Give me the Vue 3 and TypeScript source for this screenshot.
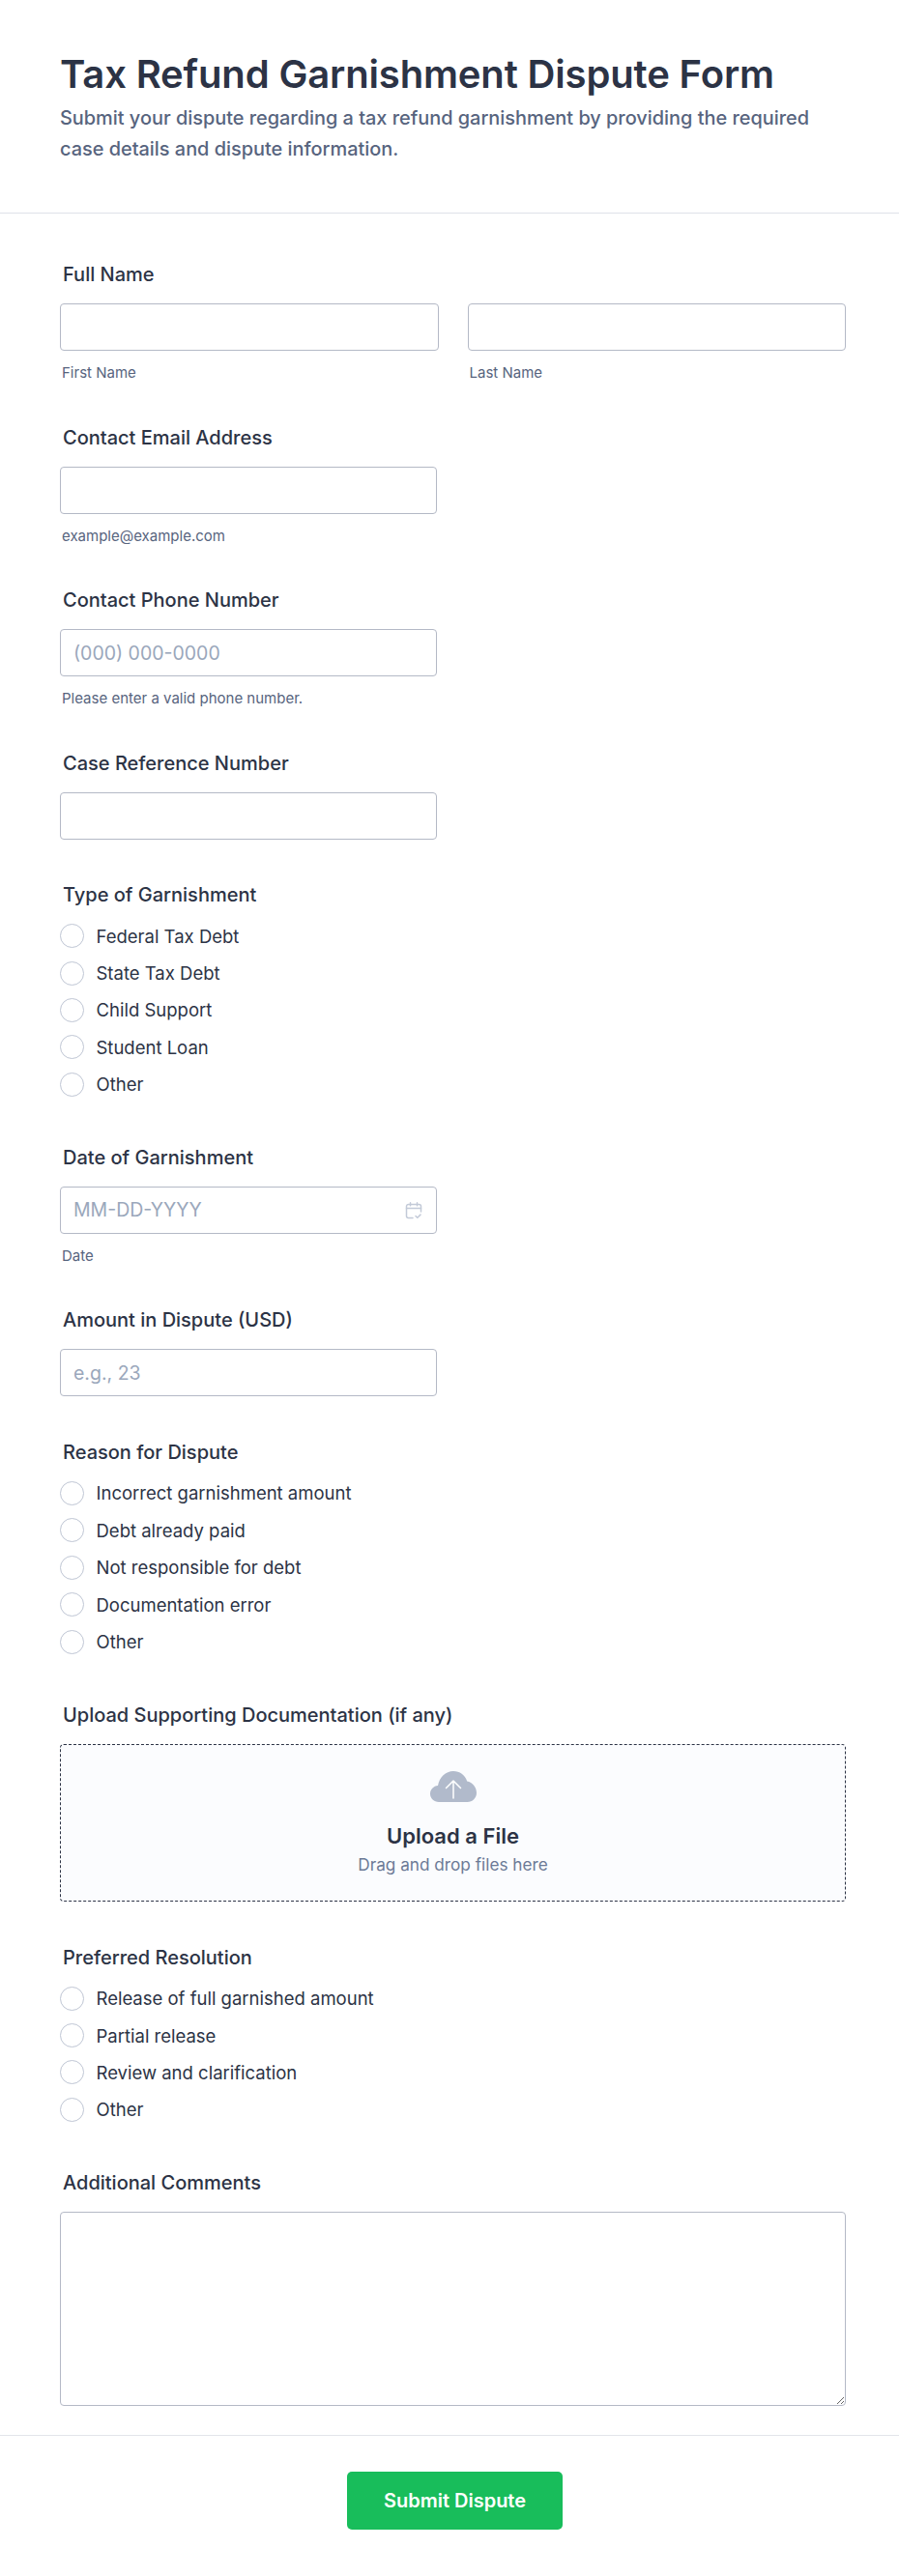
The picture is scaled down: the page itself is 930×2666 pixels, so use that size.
<script setup lang="ts">
const garnishmentTypes = ['Federal Tax Debt', 'State Tax Debt', 'Child Support', 'Student Loan', 'Other']
const disputeReasons = ['Incorrect garnishment amount', 'Debt already paid', 'Not responsible for debt', 'Documentation error', 'Other']
const resolutions = ['Release of full garnished amount', 'Partial release', 'Review and clarification', 'Other']
</script>

<template>
  <div class="page">
    <header class="header">
      <h1>Tax Refund Garnishment Dispute Form</h1>
      <p>Submit your dispute regarding a tax refund garnishment by providing the required case details and dispute information.</p>
    </header>

    <form class="form" @submit.prevent>
      <div class="field">
        <label class="label">Full Name</label>
        <div class="name-row">
          <div class="name-col">
            <input class="input" type="text" />
            <span class="helper">First Name</span>
          </div>
          <div class="name-col">
            <input class="input" type="text" />
            <span class="helper">Last Name</span>
          </div>
        </div>
      </div>

      <div class="field">
        <label class="label">Contact Email Address</label>
        <input class="input short" type="text" />
        <span class="helper">example@example.com</span>
      </div>

      <div class="field">
        <label class="label">Contact Phone Number</label>
        <input class="input short" type="text" placeholder="(000) 000-0000" />
        <span class="helper">Please enter a valid phone number.</span>
      </div>

      <div class="field">
        <label class="label">Case Reference Number</label>
        <input class="input short" type="text" />
      </div>

      <div class="field radios-field">
        <label class="label">Type of Garnishment</label>
        <div class="radio-list">
          <div class="radio-row" v-for="item in garnishmentTypes" :key="item">
            <span class="radio"></span>{{ item }}
          </div>
        </div>
      </div>

      <div class="field">
        <label class="label">Date of Garnishment</label>
        <div class="date-box short">
          <input class="input" type="text" placeholder="MM-DD-YYYY" />
          <svg class="calendar" width="18" height="18" viewBox="0 0 18 18" fill="none" stroke="#c3cad8" stroke-width="1.5" stroke-linecap="round" stroke-linejoin="round">
            <path d="M8 16.5H3.5a2 2 0 0 1-2-2v-10a2 2 0 0 1 2-2h11a2 2 0 0 1 2 2V10" />
            <path d="M1.5 6.5h15M5.5 0.8v3M12.5 0.8v3M11 14.5l1.8 1.8 3.2-3.2" />
          </svg>
        </div>
        <span class="helper">Date</span>
      </div>

      <div class="field">
        <label class="label">Amount in Dispute (USD)</label>
        <input class="input short" type="text" placeholder="e.g., 23" />
      </div>

      <div class="field radios-field">
        <label class="label">Reason for Dispute</label>
        <div class="radio-list">
          <div class="radio-row" v-for="item in disputeReasons" :key="item">
            <span class="radio"></span>{{ item }}
          </div>
        </div>
      </div>

      <div class="field">
        <label class="label upload-label">Upload Supporting Documentation (if any)</label>
        <div class="upload">
          <svg width="48" height="32" viewBox="0 0 48 32">
            <path fill="#b1bacb" d="M9 32C4 32 0 28.200 0 23.500 0 19 3.500 15.300 8 15 9.500 6.500 16 0 24 0c6.500 0 12 3.800 14.200 10.500C43.800 11.500 48 16.800 48 22.500 48 27.800 43.800 32 38.500 32z" />
            <path fill="none" stroke="#fff" stroke-width="1.500" stroke-linecap="round" stroke-linejoin="round" d="M24 28V10M16.500 17.500 24 10l7.500 7.500" />
          </svg>
          <strong>Upload a File</strong>
          <span>Drag and drop files here</span>
        </div>
      </div>

      <div class="field radios-field">
        <label class="label">Preferred Resolution</label>
        <div class="radio-list">
          <div class="radio-row" v-for="item in resolutions" :key="item">
            <span class="radio"></span>{{ item }}
          </div>
        </div>
      </div>

      <div class="field">
        <label class="label">Additional Comments</label>
        <textarea class="input comments"></textarea>
      </div>
    </form>

    <footer class="footer">
      <button class="submit" type="button">Submit Dispute</button>
    </footer>
  </div>
</template>

<style>
body {
  background: #fff;
}
</style>

<style scoped>
.page {
  font-family: Inter, "Liberation Sans", sans-serif;
  color: #2c3345;
  height: 2666px;
  overflow: hidden;
}

.header {
  height: 221px;
  box-sizing: border-box;
  padding: 53px 62px 0;
  border-bottom: 1px solid #dfe2e9;
}

.header h1 {
  margin: 0;
  font-size: 40px;
  line-height: 48px;
  font-weight: 600;
  letter-spacing: -0.15px;
}

.header p {
  margin: 5px 0 0;
  font-size: 19.9px;
  line-height: 32px;
  font-weight: 500;
  color: #57647e;
  width: 800px;
}

.form {
  padding: 51px 55px 0 62px;
  display: flex;
  flex-direction: column;
  gap: 45.5px;
}

.field {
  display: flex;
  flex-direction: column;
}

.radios-field {
  padding-bottom: 6px;
}

.label {
  display: block;
  font-size: 20px;
  line-height: 24px;
  font-weight: 500;
  margin: 0 0 18px 3px;
}

.name-row {
  display: flex;
  gap: 30px;
}

.name-col {
  flex: 1;
  display: flex;
  flex-direction: column;
}

.input {
  display: block;
  box-sizing: border-box;
  width: 100%;
  height: 49px;
  padding: 0 13px;
  border: 1px solid #b4b9c6;
  border-radius: 4px;
  background: #fff;
  font: 400 19.5px Inter, sans-serif;
  color: #2c3345;
  outline: none;
}

.input::placeholder {
  color: #9aa7bb;
  opacity: 1;
}

.short {
  width: 390px;
}

.helper {
  display: block;
  margin: 14px 0 0 2px;
  font-size: 15px;
  line-height: 18px;
  color: #57647e;
}

.date-box {
  position: relative;
}

.calendar {
  position: absolute;
  right: 15px;
  top: 16px;
}

.radio-list {
  display: flex;
  flex-direction: column;
  gap: 14.4px;
  margin-top: 0.7px;
}

.radio-row {
  display: flex;
  align-items: center;
  height: 24px;
  font-size: 18.5px;
  color: #2c3345;
  gap: 12.5px;
}

.radio {
  box-sizing: border-box;
  width: 25px;
  height: 25px;
  border: 1.5px solid #bfc6d4;
  border-radius: 50%;
  background: #fff;
  flex: none;
}

.upload-label {
  margin-bottom: 18px;
}

.upload {
  box-sizing: border-box;
  height: 163.5px;
  border: 1px dashed #2c3345;
  border-radius: 4px;
  background: #fbfcfe;
  display: flex;
  flex-direction: column;
  align-items: center;
  padding-top: 27px;
}

.upload strong {
  margin-top: 21px;
  font-size: 22px;
  line-height: 28px;
  font-weight: 600;
}

.upload span {
  margin-top: 4px;
  font-size: 17.2px;
  line-height: 24px;
  color: #6c7a96;
}

.comments {
  height: 201px;
  resize: vertical;
}

.footer {
  margin-top: 30px;
  border-top: 1px solid #e3e5ea;
  display: flex;
  justify-content: center;
  padding: 37px 0 0 11px;
}

.submit {
  width: 223px;
  height: 60px;
  border: none;
  border-radius: 5px;
  background: #18bd5b;
  color: #fff;
  font: 600 20px Inter, sans-serif;
}
</style>
